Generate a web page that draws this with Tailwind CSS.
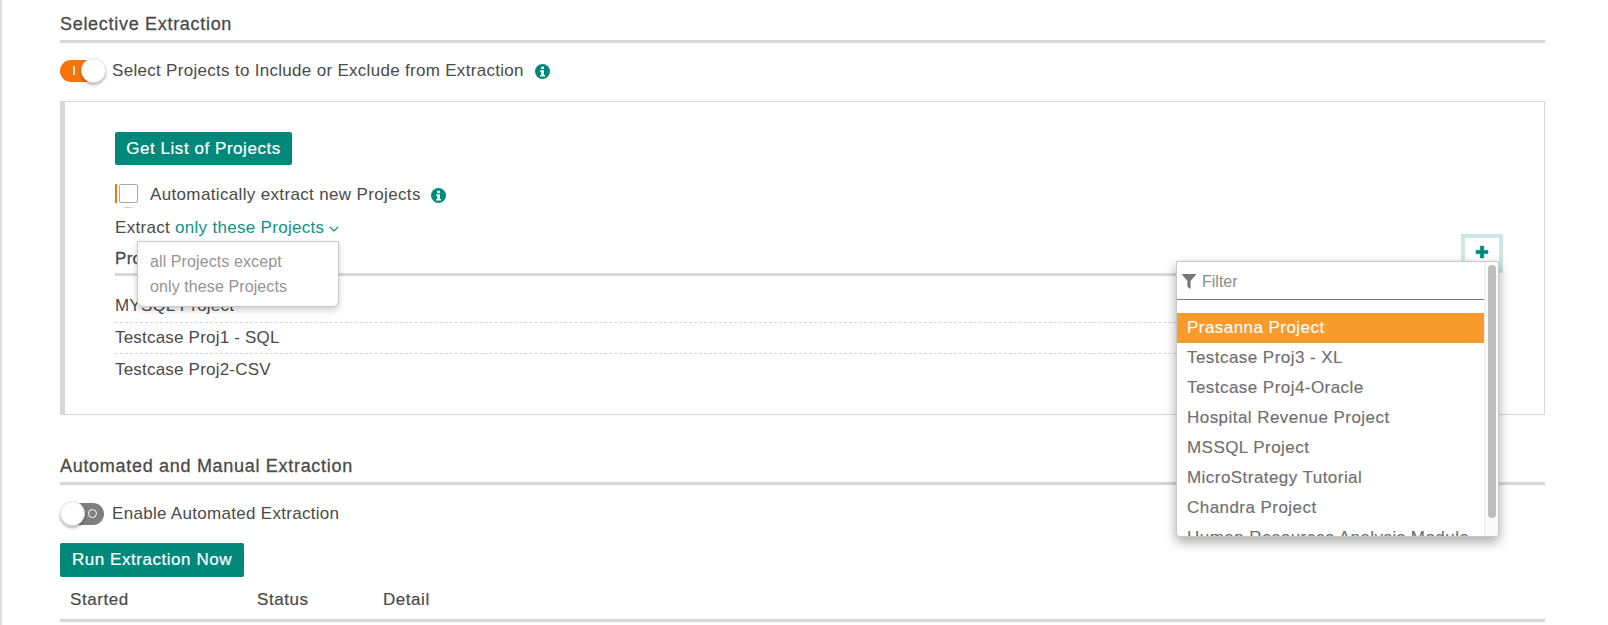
<!DOCTYPE html>
<html>
<head>
<meta charset="utf-8">
<script src="https://cdn.jsdelivr.net/npm/@tailwindcss/browser@4"></script>
</head>
<body class="bg-white">
<div class="relative w-[1608px] h-[625px] overflow-hidden border-l-2 border-[#dcdcdc] font-['Liberation_Sans',Arial,sans-serif] text-[17px] text-[#4a4a4a]">
  <div class="ml-[58px] w-[1485px]">
    <!-- Selective Extraction -->
    <h2 class="h-[43px] pt-[13px] text-[18px] leading-[22px] border-b-[3px] border-[#d8d8d8] tracking-[0.7px] [-webkit-text-stroke:0.3px]">Selective Extraction</h2>
    <div class="h-[58px] flex items-center pb-[4px] pt-[2px]">
      <div class="relative w-[45px] h-[22px] mr-[7px] shrink-0">
        <div class="absolute left-0 top-0 w-[36px] h-[22px] rounded-full bg-[#f6740a]"></div>
        <div class="absolute left-[13px] top-[6px] w-[2px] h-[9px] bg-white/80"></div>
        <div class="absolute left-[21px] top-[-2px] w-[25px] h-[25px] rounded-full bg-white border border-[#e5e5e5] shadow-[0_2px_3px_rgba(0,0,0,0.3)]"></div>
      </div>
      <span class="tracking-[0.3px]">Select Projects to Include or Exclude from Extraction</span>
      <svg class="ml-[11px]" width="15" height="15" viewBox="0 0 16 16"><circle cx="8" cy="8" r="8" fill="#00897b"/><rect x="6.6" y="2.8" width="3" height="2.6" fill="#fff"/><path d="M5.6 6.6h4v5h1.2v1.800H5.400v-1.800h1.200V8.400H5.600z" fill="#fff"/></svg>
    </div>
    <!-- Box -->
    <div class="relative h-[314px] border border-[#d8d8d8] border-l-[5px] pl-[50px] pt-[30px]">
      <button class="block w-[177px] h-[33px] rounded-[2px] bg-[#00897b] text-white text-[17px] tracking-[0.55px] [-webkit-text-stroke:0.2px]">Get List of Projects</button>
      <div class="flex items-center h-[20px] mt-[20px] relative">
        <span class="w-[2px] h-[19px] bg-[#f6740a] mb-[3px]"></span>
        <span class="ml-[2px] w-[19px] h-[19px] rounded-[2px] border border-[#aaaaaa] bg-white mb-[3px]"></span>
        <span class="absolute left-[9px] top-[22px] w-[8px] h-[1px] bg-[#cccccc]"></span>
        <span class="ml-[12px] tracking-[0.35px]">Automatically extract new Projects</span>
        <svg class="ml-[10px]" width="15" height="15" viewBox="0 0 16 16"><circle cx="8" cy="8" r="8" fill="#00897b"/><rect x="6.6" y="2.8" width="3" height="2.6" fill="#fff"/><path d="M5.6 6.6h4v5h1.2v1.800H5.400v-1.800h1.200V8.400H5.600z" fill="#fff"/></svg>
      </div>
      <div class="flex items-center h-[22px] mt-[12px] tracking-[0.3px]">
        <span>Extract</span>
        <span class="ml-[5px] text-[#0b9585]">only these Projects</span>
        <svg class="ml-[5px] mt-[1px]" width="10" height="6" viewBox="0 0 10 6"><path d="M1 1l4 4 4-4" fill="none" stroke="#0b9585" stroke-width="1.2"/></svg>
      </div>
      <div class="h-[37px] pt-[10px] leading-[20px] border-b-[3px] border-[#d8d8d8] w-[1371px] tracking-[0.3px] [-webkit-text-stroke:0.3px]">Project</div>
      <div class="w-[1371px] tracking-[0.2px]">
        <div class="h-[47px] pt-[20px] leading-[20px] border-b border-dashed border-[#d5d5d5]">MYSQL Project</div>
        <div class="h-[31px] pt-[5px] leading-[20px] border-b border-dashed border-[#d5d5d5]">Testcase Proj1 - SQL</div>
        <div class="h-[31px] pt-[6px] leading-[20px]">Testcase Proj2-CSV</div>
      </div>

      <!-- All/only menu -->
      <div class="absolute left-[72px] top-[139px] w-[202px] h-[66px] bg-white border border-[#c8c8c8] rounded-b-[6px] shadow-[0_3px_6px_rgba(0,0,0,0.2)] pl-[12px] pt-[7px] text-[16px] text-[#959595] font-light tracking-[0.1px]">
        <div class="h-[25px] leading-[25px]">all Projects except</div>
        <div class="h-[25px] leading-[25px]">only these Projects</div>
      </div>

      <!-- plus -->
      <div class="absolute left-[1396px] top-[132px] w-[42px] h-[39px] border-[4px] border-[#cbe8e4] flex items-center justify-center pb-[4px]">
        <svg width="14" height="14" viewBox="0 0 14 14"><path d="M5.2 1h3.6v4.2H13v3.6H8.800v4.200H5.200V8.800H1V5.200h4.200z" fill="#00897b" stroke="#00897b" stroke-width="0.4" stroke-linejoin="round"/></svg>
      </div>
    </div>
    <!-- Automated -->
    <h2 class="h-[70px] pt-[40px] text-[18px] leading-[22px] border-b-[3px] border-[#d8d8d8] tracking-[0.7px] [-webkit-text-stroke:0.3px]">Automated and Manual Extraction</h2>
    <div class="h-[58px] flex items-center pb-[1px]">
      <div class="relative w-[45px] h-[22px] mr-[7px] shrink-0">
        <div class="absolute left-[8px] top-0 w-[36px] h-[22px] rounded-full bg-[#7f7f7f]"></div>
        <div class="absolute left-[28px] top-[6px] w-[9px] h-[9px] rounded-full border-[1.5px] border-white"></div>
        <div class="absolute left-0 top-[-2px] w-[25px] h-[25px] rounded-full bg-white border border-[#e5e5e5] shadow-[0_2px_3px_rgba(0,0,0,0.3)]"></div>
      </div>
      <span class="tracking-[0.3px]">Enable Automated Extraction</span>
    </div>
    <button class="block w-[184px] h-[34px] rounded-[2px] bg-[#00897b] text-white text-[17px] tracking-[0.55px] [-webkit-text-stroke:0.2px]">Run Extraction Now</button>
    <div class="flex h-[45px] pt-[12px] leading-[22px] border-b-[3px] border-[#d8d8d8] tracking-[0.55px] [-webkit-text-stroke:0.2px]">
      <span class="ml-[10px] w-[187px]">Started</span>
      <span class="w-[126px]">Status</span>
      <span>Detail</span>
    </div>
  </div>

  <!-- Filter dropdown -->
  <div class="absolute left-[1174px] top-[261px] w-[323px] h-[276px] overflow-hidden bg-white border border-[#c8c8c8] rounded-b-[4px] shadow-[0_5px_12px_rgba(0,0,0,0.35)] flex text-[#6f6f6f]">
    <div class="w-[307px] shrink-0">
      <div class="h-[38px] border-b border-[#808080] flex items-center pl-[4px] pt-[2px] text-[16px] text-[#8c8c8c]">
        <svg width="16" height="17" viewBox="0 0 15 16"><path d="M0.500 1h14L9 7.500V15L6 13V7.500z" fill="#777777"/></svg>
        <span class="ml-[5px]">Filter</span>
      </div>
      <div class="mt-[13px] tracking-[0.45px] [-webkit-text-stroke:0.15px]">
        <div class="h-[30px] leading-[30px] pl-[10px] bg-[#f99a2d] text-white">Prasanna Project</div>
        <div class="h-[30px] leading-[30px] pl-[10px]">Testcase Proj3 - XL</div>
        <div class="h-[30px] leading-[30px] pl-[10px]">Testcase Proj4-Oracle</div>
        <div class="h-[30px] leading-[30px] pl-[10px]">Hospital Revenue Project</div>
        <div class="h-[30px] leading-[30px] pl-[10px]">MSSQL Project</div>
        <div class="h-[30px] leading-[30px] pl-[10px]">MicroStrategy Tutorial</div>
        <div class="h-[30px] leading-[30px] pl-[10px]">Chandra Project</div>
        <div class="h-[30px] leading-[30px] pl-[10px] whitespace-nowrap">Human Resources Analysis Module</div>
      </div>
    </div>
    <div class="w-[15px] shrink-0 h-full bg-[#fafafa] border-l border-[#ececec] pl-[3px] pt-[3px]">
      <div class="w-[8px] h-[253px] rounded-full bg-[#bdbdbd]"></div>
    </div>
  </div>
</div>
</body>
</html>
